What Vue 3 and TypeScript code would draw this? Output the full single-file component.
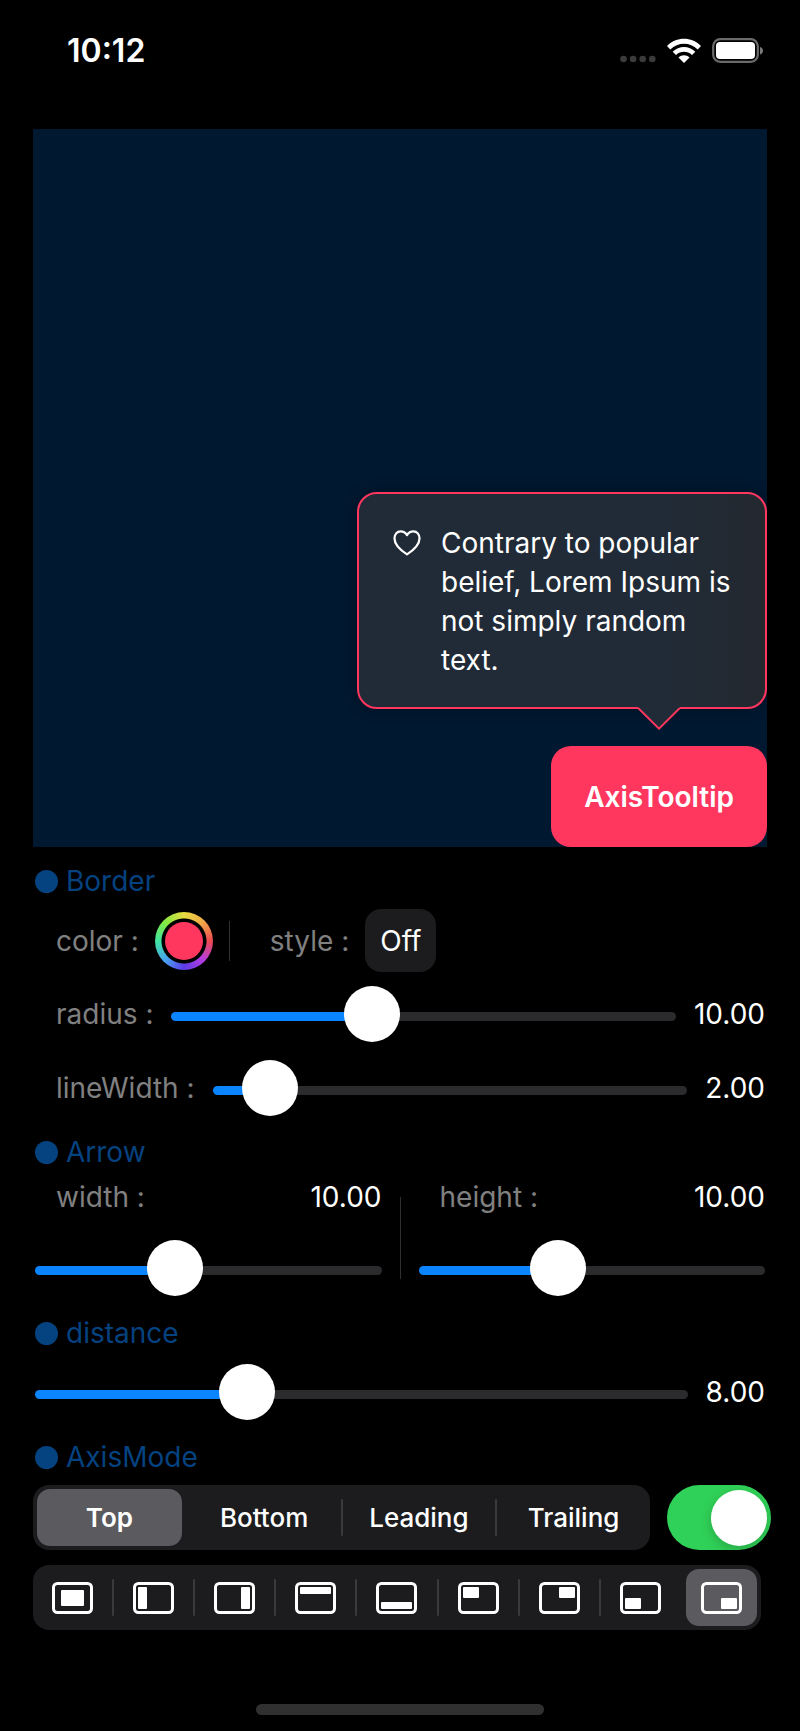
<script setup lang="ts">
import { computed, reactive, ref } from 'vue'

interface Shape {
  name: string
  x: number
  y: number
  w: number
  h: number
}

const borderColor = ref('#ff375f')
const dashed = ref(false)
const enabled = ref(true)
const edge = ref('Top')
const alignment = ref('Bottom trailing')

const values = reactive({ radius: 10, lineWidth: 2, width: 10, height: 10, distance: 8 })
const limits = { radius: 26, lineWidth: 28, width: 26, height: 26, distance: 26 }

const edges = ['Top', 'Bottom', 'Leading', 'Trailing']
const shapes: Shape[] = [
  { name: 'Center', x: 9, y: 8, w: 23, h: 16 },
  { name: 'Leading', x: 5, y: 5, w: 9, h: 22 },
  { name: 'Trailing', x: 27, y: 5, w: 9, h: 22 },
  { name: 'Top', x: 5, y: 5, w: 31, h: 7 },
  { name: 'Bottom', x: 5, y: 20, w: 31, h: 7 },
  { name: 'Top leading', x: 5, y: 5, w: 16, h: 11 },
  { name: 'Top trailing', x: 20, y: 5, w: 16, h: 11 },
  { name: 'Bottom leading', x: 5, y: 16, w: 16, h: 11 },
  { name: 'Bottom trailing', x: 20, y: 16, w: 16, h: 11 },
]

const fills = computed(() => ({
  radius: { '--fill': values.radius / limits.radius },
  lineWidth: { '--fill': values.lineWidth / limits.lineWidth },
  width: { '--fill': values.width / limits.width },
  height: { '--fill': values.height / limits.height },
  distance: { '--fill': values.distance / limits.distance },
}))

const fixed = (n: number): string => Number(n).toFixed(2)
</script>

<template>
  <div class="screen">
    <header class="status">
      <time class="clock">10:12</time>
      <div class="indicators">
        <svg class="cell" viewBox="0 0 36 8" aria-hidden="true">
          <circle cx="3.5" cy="4" r="3.3" /><circle cx="13.1" cy="4" r="3.3" />
          <circle cx="22.7" cy="4" r="3.3" /><circle cx="32.3" cy="4" r="3.3" />
        </svg>
        <svg class="wifi" viewBox="0 0 36 26" aria-hidden="true">
          <path d="M1 8.1C10.500 -1.600 25.500 -1.600 35 8.100L31.700 11.400C24 3.700 12 3.700 4.300 11.400Z" />
          <path d="M6.700 13.800C13 7.400 23 7.400 29.300 13.800L26 17.100C21.500 12.700 14.500 12.700 10 17.100Z" />
          <path d="M12.500 19.500C15.500 16.600 20.500 16.600 23.500 19.500L18 25Z" />
        </svg>
        <svg class="battery" viewBox="0 0 52 26" aria-hidden="true">
          <rect x="1.200" y="1.200" width="44.600" height="22.600" rx="7" fill="none" stroke="#6b6b6b" stroke-width="2.200" />
          <rect x="4" y="4" width="39" height="17" rx="4" fill="#fff" />
          <path d="M48 9C52 10 52 15.500 48 16.500Z" fill="#7a7a7a" />
        </svg>
      </div>
    </header>

    <main class="main">
      <section class="stage">
        <div class="tooltip" role="tooltip">
          <svg class="heart" viewBox="0 0 30 28" aria-hidden="true">
            <path d="M15 5.500C13.300 2.900 10.900 1.500 8.200 1.500C4.200 1.500 1.500 4.700 1.500 9C1.500 15.500 7.500 21.500 15 26.300C22.500 21.500 28.500 15.500 28.500 9C28.500 4.700 25.800 1.500 21.800 1.500C19.100 1.500 16.700 2.900 15 5.500Z" />
          </svg>
          <p class="message">Contrary to popular belief, Lorem Ipsum is not simply random text.</p>
          <svg class="pointer" viewBox="0 0 42 24" aria-hidden="true">
            <path d="M0 0H42L21 22Z" fill="#212b37" />
            <path d="M0.600 1.400L21 21.600L41.400 1.400" fill="none" stroke="#ff375f" stroke-width="2" />
          </svg>
        </div>
        <button class="anchor" type="button">AxisTooltip</button>
      </section>

      <section class="group">
        <h2 class="heading">Border</h2>
        <div class="row options">
          <label class="name" for="color">color :</label>
          <input id="color" v-model="borderColor" class="swatch" type="color" />
          <span class="rule"></span>
          <span id="style-name" class="name">style :</span>
          <button class="style-button" type="button" aria-describedby="style-name" @click="dashed = !dashed">
            {{ dashed ? 'On' : 'Off' }}
          </button>
        </div>
        <div class="row line">
          <label class="name" for="radius">radius :</label>
          <input id="radius" v-model.number="values.radius" class="slider" type="range" min="0" :max="limits.radius" step="any" :style="fills.radius" />
          <output class="value" for="radius">{{ fixed(values.radius) }}</output>
        </div>
        <div class="row line">
          <label class="name" for="line-width">lineWidth :</label>
          <input id="line-width" v-model.number="values.lineWidth" class="slider" type="range" min="0" :max="limits.lineWidth" step="any" :style="fills.lineWidth" />
          <output class="value" for="line-width">{{ fixed(values.lineWidth) }}</output>
        </div>
      </section>

      <section class="group arrow">
        <h2 class="heading">Arrow</h2>
        <div class="pair">
          <div class="dimension">
            <div class="caption">
              <label class="name" for="width">width :</label>
              <output class="value" for="width">{{ fixed(values.width) }}</output>
            </div>
            <input id="width" v-model.number="values.width" class="slider" type="range" min="0" :max="limits.width" step="any" :style="fills.width" />
          </div>
          <span class="rule tall"></span>
          <div class="dimension">
            <div class="caption">
              <label class="name" for="height">height :</label>
              <output class="value" for="height">{{ fixed(values.height) }}</output>
            </div>
            <input id="height" v-model.number="values.height" class="slider" type="range" min="0" :max="limits.height" step="any" :style="fills.height" />
          </div>
        </div>
      </section>

      <section class="group">
        <h2 id="distance-name" class="heading">distance</h2>
        <div class="row distance">
          <input id="distance" v-model.number="values.distance" class="slider" type="range" min="0" :max="limits.distance" step="any" aria-labelledby="distance-name" :style="fills.distance" />
          <output class="value" for="distance">{{ fixed(values.distance) }}</output>
        </div>
      </section>

      <section class="group">
        <h2 class="heading">AxisMode</h2>
      </section>
      <section class="modes">
        <div class="mode-row">
          <div class="segments" role="radiogroup" aria-label="Axis mode">
            <label v-for="item in edges" :key="item" class="segment">
              <input v-model="edge" type="radio" name="edge" :value="item" />
              <span>{{ item }}</span>
            </label>
          </div>
          <input v-model="enabled" class="switch" type="checkbox" role="switch" aria-label="Show tooltip" />
        </div>
        <div class="segments shapes" role="radiogroup" aria-label="Alignment">
          <label v-for="shape in shapes" :key="shape.name" class="segment">
            <input v-model="alignment" type="radio" name="alignment" :value="shape.name" :aria-label="shape.name" />
            <svg class="shape" viewBox="0 0 41 32" aria-hidden="true">
              <rect x="1.500" y="1.500" width="38" height="29" rx="4" fill="none" stroke="#fff" stroke-width="3" />
              <rect :x="shape.x" :y="shape.y" :width="shape.w" :height="shape.h" rx="1" fill="#fff" />
            </svg>
          </label>
        </div>
      </section>
    </main>

    <footer class="home"><span class="home-bar"></span></footer>
  </div>
</template>

<style>
body {
  margin: 0;
  background: #000;
}
</style>

<style scoped>
.screen {
  box-sizing: border-box;
  display: flex;
  flex-direction: column;
  min-height: 100vh;
  background: #000;
  color: #fff;
  font-family: Inter, Roboto, "Liberation Sans", sans-serif;
  font-size: 28px;
  line-height: 34px;
}

.screen *,
.screen *::before {
  box-sizing: border-box;
}

button,
input {
  margin: 0;
  border: 0;
  color: inherit;
  font: inherit;
}

.status {
  display: flex;
  justify-content: space-between;
  align-items: center;
  height: 129px;
  padding: 0 36px 28px 67px;
}

.clock {
  font-size: 32px;
  font-weight: 600;
}

.indicators {
  display: flex;
  align-items: center;
  gap: 10px;
}

.cell {
  width: 36px;
  height: 8px;
  margin-top: 16px;
  fill: #3b3b3b;
}

.wifi {
  width: 36px;
  height: 26px;
  fill: #fff;
}

.battery {
  width: 52px;
  height: 26px;
}

.main {
  flex: 1;
  display: flex;
  flex-direction: column;
}

.stage {
  flex: 1;
  display: flex;
  flex-direction: column;
  align-items: flex-end;
  justify-content: flex-end;
  gap: 37px;
  margin: 0 33px;
  background: #001830;
}

.tooltip {
  position: relative;
  display: flex;
  gap: 20px;
  width: 410px;
  max-width: 100%;
  padding: 30px 30px 27px 34px;
  border: 2px solid #ff375f;
  border-radius: 20px;
  background: linear-gradient(90deg, #212b37 75%, #23282f);
  box-shadow: 0 0 14px rgba(0, 0, 0, 0.3);
}

.heart {
  flex: none;
  width: 28px;
  height: 26px;
  margin-top: 6px;
  fill: none;
  stroke: #fff;
  stroke-width: 2.4;
  stroke-linejoin: round;
}

.message {
  flex: 1;
  margin: 0;
  line-height: 39px;
}

.pointer {
  position: absolute;
  top: 100%;
  right: 85px;
  width: 42px;
  height: 24px;
}

.anchor {
  height: 101px;
  padding: 0 33px;
  border-radius: 20px;
  background: #ff375f;
  font-weight: 600;
}

.group {
  padding: 17px 35px 0;
}

.group + .group {
  padding-top: 20px;
}

.group + .arrow {
  padding-top: 19px;
}

.heading {
  display: flex;
  align-items: center;
  gap: 8px;
  margin: 0;
  color: #054280;
  font-size: 28px;
  font-weight: 400;
}

.heading::before {
  content: "";
  width: 23px;
  height: 23px;
  border-radius: 50%;
  background: #054280;
}

.row {
  display: flex;
  align-items: center;
}

.name {
  color: #808080;
  white-space: nowrap;
}

.options {
  margin-top: 11px;
  padding-left: 21px;
}

.swatch {
  appearance: none;
  width: 58px;
  height: 58px;
  margin: 0 16px;
  padding: 10px;
  border-radius: 50%;
  background:
    radial-gradient(circle, #000 22px, transparent 23px),
    conic-gradient(#e8dc40, #f0a848 45deg, #ee4a50 90deg, #b43ce0 135deg, #5c3ce8 180deg, #48a4f0 225deg, #40e4a0 270deg, #84e840 315deg, #e8dc40);
}

.swatch::-webkit-color-swatch-wrapper {
  padding: 0;
}

.swatch::-webkit-color-swatch {
  border: 0;
  border-radius: 50%;
}

.rule {
  width: 1px;
  height: 40px;
  margin-right: 40px;
  background: #303032;
}

.style-button {
  height: 63px;
  margin-left: 16px;
  padding: 0 15px;
  border-radius: 16px;
  background: #1c1c1e;
}

.line {
  gap: 18px;
  margin-top: 14px;
  padding-left: 21px;
}

.line + .line {
  margin-top: 18px;
}

.slider {
  appearance: none;
  flex: 1;
  display: block;
  width: 100%;
  min-width: 0;
  height: 56px;
  background: transparent;
}

.slider::-webkit-slider-runnable-track {
  height: 9px;
  margin-top: 5px;
  border-radius: 5px;
  background: linear-gradient(
    90deg,
    #0a84ff calc(28px + (100% - 56px) * var(--fill)),
    #2b2b2d calc(28px + (100% - 56px) * var(--fill))
  );
}

.slider::-webkit-slider-thumb {
  appearance: none;
  width: 56px;
  height: 56px;
  margin-top: -26px;
  border-radius: 50%;
  background: #fff;
}

.pair {
  display: grid;
  grid-template-columns: 1fr 1px 1fr;
  gap: 18px;
  align-items: center;
  margin-top: 11px;
}

.caption {
  display: flex;
  justify-content: space-between;
  margin-bottom: 26px;
  padding-left: 21px;
}

.tall {
  height: 82px;
  margin: 0;
}

.distance {
  gap: 18px;
  margin-top: 14px;
}

.modes {
  display: flex;
  flex-direction: column;
  gap: 15px;
  padding: 11px 29px 0 33px;
}

.mode-row {
  display: flex;
  align-items: center;
  gap: 17px;
}

.segments {
  flex: 1;
  display: grid;
  grid-template-columns: repeat(4, 1fr);
  gap: 10px;
  height: 65px;
  padding: 4px;
  border-radius: 16px;
  background: #1c1c1e;
  font-size: 26px;
  font-weight: 500;
}

.shapes {
  flex: none;
  grid-template-columns: repeat(9, 1fr);
  margin-right: 10px;
}

.segment {
  position: relative;
  display: flex;
  align-items: center;
  justify-content: center;
  min-width: 0;
  border-radius: 13px;
}

.segment input {
  appearance: none;
  position: absolute;
  inset: 0;
  border-radius: 13px;
}

.segment:has(input:checked) {
  background: #5b5a5f;
  font-weight: 600;
}

.segment + .segment::before {
  content: "";
  position: absolute;
  left: -6px;
  width: 2px;
  height: 37px;
  border-radius: 1px;
  background: #3a3a3d;
}

.segment:has(input:checked)::before,
.segment:has(input:checked) + .segment::before {
  display: none;
}

.shape {
  width: 41px;
  height: 32px;
}

.switch {
  appearance: none;
  display: flex;
  align-items: center;
  width: 104px;
  height: 65px;
  padding: 4px;
  border-radius: 33px;
  background: #39393d;
}

.switch::before {
  content: "";
  width: 56px;
  height: 56px;
  border-radius: 50%;
  background: #fff;
  box-shadow: 0 4px 12px rgba(0, 0, 0, 0.2);
}

.switch:checked {
  justify-content: flex-end;
  background: #30d158;
}

.home {
  display: flex;
  justify-content: center;
  padding: 74px 0 16px;
}

.home-bar {
  width: 36%;
  height: 11px;
  border-radius: 6px;
  background: #303030;
}
</style>
